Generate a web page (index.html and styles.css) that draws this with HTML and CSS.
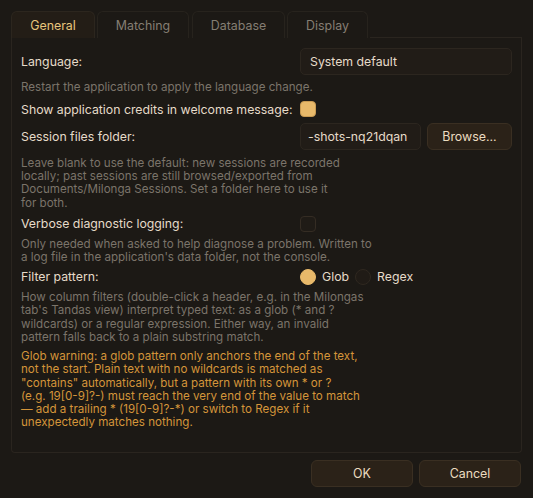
FILE: index.html
```html
<!DOCTYPE html>
<html>
<head>
<meta charset="utf-8">
<link rel="stylesheet" href="styles.css">
</head>
<body>
<div class="dialog">
  <div class="tabs">
    <div class="tab active">General</div>
    <div class="tab">Matching</div>
    <div class="tab">Database</div>
    <div class="tab">Display</div>
    <div class="tab-fill"></div>
  </div>
  <div class="panel">
    <div class="row tall">
      <div class="label">Language:</div>
      <div class="control"><div class="input wide">System default</div></div>
    </div>
    <div class="hint after-tall">Restart the application to apply the language change.</div>
    <div class="row short credits">
      <div class="label">Show application credits in welcome message:</div>
      <div class="control"><span class="check on"></span></div>
    </div>
    <div class="row tall session">
      <div class="label">Session files folder:</div>
      <div class="control">
        <div class="input path">-shots-nq21dqan</div>
        <div class="btn browse">Browse...</div>
      </div>
    </div>
    <div class="hint after-tall">Leave blank to use the default: new sessions are recorded<br>locally; past sessions are still browsed/exported from<br>Documents/Milonga Sessions. Set a folder here to use it<br>for both.</div>
    <div class="row short verbose">
      <div class="label">Verbose diagnostic logging:</div>
      <div class="control"><span class="check"></span></div>
    </div>
    <div class="hint">Only needed when asked to help diagnose a problem. Written to<br>a log file in the application's data folder, not the console.</div>
    <div class="row short filter">
      <div class="label">Filter pattern:</div>
      <div class="control radios">
        <span class="radio on"></span><span class="rlabel">Glob</span>
        <span class="radio"></span><span class="rlabel">Regex</span>
      </div>
    </div>
    <div class="hint">How column filters (double-click a header, e.g. in the Milongas<br>tab's Tandas view) interpret typed text: as a glob (* and ?<br>wildcards) or a regular expression. Either way, an invalid<br>pattern falls back to a plain substring match.</div>
    <div class="hint warn">Glob warning: a glob pattern only anchors the end of the text,<br>not the start. Plain text with no wildcards is matched as<br>"contains" automatically, but a pattern with its own * or ?<br>(e.g. 19[0-9]?-) must reach the very end of the value to match<br>— add a trailing * (19[0-9]?-*) or switch to Regex if it<br>unexpectedly matches nothing.</div>
  </div>
  <div class="footer">
    <div class="btn action">OK</div>
    <div class="btn action">Cancel</div>
  </div>
</div>
</body>
</html>
```

FILE: styles.css
```css
* { box-sizing: border-box; }
html, body {
  margin: 0;
  padding: 0;
  background: #1c1915;
  width: 533px;
  height: 498px;
  overflow: hidden;
  font-family: Inter, "Noto Sans", sans-serif;
}
.dialog {
  padding: 11px 11px 0 11px;
}
.tabs {
  display: flex;
  gap: 2px;
  height: 27px;
}
.tab {
  height: 27px;
  border: 1px solid #27231d;
  border-bottom: none;
  border-radius: 6px 6px 0 0;
  color: #857e73;
  font-size: 12.4px;
  display: flex;
  align-items: center;
  justify-content: center;
  background: #1c1915;
}
.tab:nth-child(1) { width: 84px; }
.tab:nth-child(2) { width: 92px; }
.tab:nth-child(3) { width: 93px; margin-left: 1px; }
.tab:nth-child(4) { width: 81px; }
.tab.active {
  background: #231d16;
  color: #e8c57c;
  border-color: #2c261e;
}
.tab-fill { flex: 1; border-bottom: 1px solid #2a251f; }
.panel {
  height: 415px;
  border: 1px solid #2a251f;
  border-top: none;
  border-radius: 0 0 4px 4px;
  padding: 9px 9px 0 9px;
  color: #e6dbc9;
  font-size: 12.3px;
  display: flex;
  flex-direction: column;
}
.row {
  display: flex;
  align-items: center;
  flex-shrink: 0;
}
.row.tall { height: 28px; }
.row.short { height: 20px; }
.row.credits { margin-top: 4.5px; }
.row.session { margin-top: 3.5px; }
.row.verbose { margin-top: 3.8px; }
.row.filter { margin-top: 2.4px; }
.label {
  width: 279px;
  color: #e6dbc9;
  white-space: nowrap;
}
.control {
  flex: 1;
  display: flex;
  gap: 6px;
  align-items: center;
}
.input {
  height: 27px;
  border: 1px solid #2c261f;
  border-radius: 5px;
  background: #211c17;
  color: #e6dbc9;
  display: flex;
  align-items: center;
  padding-left: 9px;
  font-size: 12.3px;
  white-space: nowrap;
  overflow: hidden;
}
.input.wide { width: 212px; }
.input.path { width: 121px; padding-left: 7px; }
.btn {
  height: 27px;
  border: 1px solid #3a2f22;
  border-radius: 6px;
  background: #2b2218;
  color: #ecdcc0;
  display: flex;
  align-items: center;
  justify-content: center;
  font-size: 12.4px;
}
.btn.browse { width: 85px; }
.check {
  width: 16px;
  height: 16px;
  border-radius: 4px;
  border: 1px solid #342c23;
  background: #1f1b16;
  display: inline-block;
}
.check.on {
  background: #e8b96a;
  border-color: #c89a52;
}
.radios { gap: 0; }
.radio {
  width: 16px;
  height: 16px;
  border-radius: 50%;
  border: 1px solid #2f2820;
  background: #201b16;
  display: inline-block;
}
.radio.on { background: #e8b96a; border-color: #e8b96a; }
.rlabel { margin-left: 6px; margin-right: 6px; color: #e6dbc9; }
.hint {
  font-size: 11.6px;
  line-height: 13.2px;
  color: #7b746a;
  margin-top: 4.4px;
  white-space: nowrap;
  flex-shrink: 0;
}
.hint.after-tall { margin-top: 6.4px; }
.hint.warn { color: #d4953a; margin-top: 6.2px; }
.footer {
  display: flex;
  justify-content: flex-end;
  gap: 6px;
  padding-top: 7px;
  padding-right: 1px;
}
.btn.action { width: 102px; height: 27px; }
```
